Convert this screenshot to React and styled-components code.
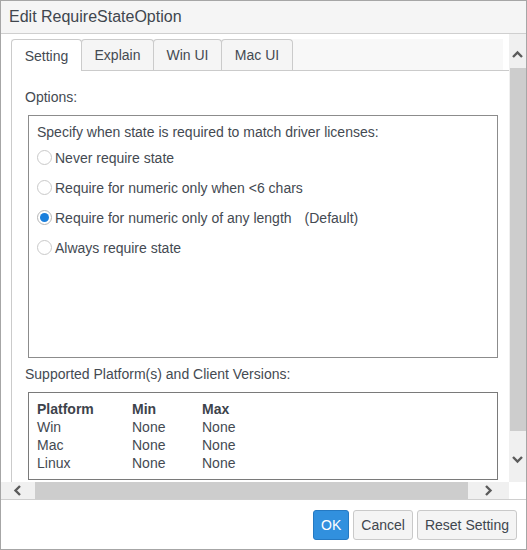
import React from 'react'
import styled, { createGlobalStyle } from 'styled-components';

const GlobalStyle = createGlobalStyle`
  html, body {
    margin: 0;
    padding: 0;
    background: #fff;
  }
  * {
    box-sizing: border-box;
  }
`;

const Dialog = styled.div`
  width: 527px;
  height: 550px;
  border: 1px solid #a6a6a6;
  display: flex;
  flex-direction: column;
  font-family: "Liberation Sans", Arial, sans-serif;
  font-size: 14px;
  color: #444a52;
  background: #fff;
`;

const TitleBar = styled.div`
  height: 33px;
  flex: none;
  display: flex;
  align-items: center;
  padding-left: 8px;
  background: #f5f5f5;
  border-bottom: 1px solid #cfcfcf;
  font-size: 16px;
  color: #40464e;
`;

const Main = styled.div`
  height: 465px;
  flex: none;
  display: grid;
  grid-template-columns: 1fr 17px;
  grid-template-rows: 1fr 17px;
`;

const Viewport = styled.div`
  overflow: hidden;
  padding: 5px 0 0 10px;
`;

const Tabs = styled.div`
  width: 540px;
`;

const TabList = styled.div`
  display: flex;
  width: 492px;
  height: 31px;
  background: #f8f8f8;
`;

const Tab = styled.div`
  position: relative;
  z-index: ${p => (p.active ? 1 : 0)};
  width: ${p => p.w};
  height: ${p => (p.active ? '32px' : '31px')};
  margin-right: -1px;
  display: flex;
  align-items: center;
  justify-content: center;
  border: 1px solid #cbcbcb;
  border-bottom: none;
  border-radius: 4px 4px 0 0;
  background: ${p => (p.active ? '#fff' : '#f5f5f5')};
  color: #444a52;
`;

const Panel = styled.div`
  border-top: 1px solid #cbcbcb;
  border-left: 1px solid #cbcbcb;
  padding: 17px 0 20px 13px;
  height: 420px;
`;

const Label = styled.div`
  line-height: 18px;
  margin-top: ${p => p.top || '0px'};
`;

const Box = styled.div`
  width: 470px;
  height: ${p => p.height};
  margin: 9px 0 0 3px;
  border: 1px solid ${p => p.border || '#8c8c8c'};
  padding: ${p => p.pad};
`;

const Prompt = styled.div`
  line-height: 18px;
  margin-bottom: 2px;
`;

const RadioRow = styled.label`
  height: 30px;
  display: flex;
  align-items: center;
`;

const Radio = styled.input.attrs({ type: 'radio' })`
  appearance: none;
  width: 15px;
  height: 15px;
  margin: -2px 3px 0 0;
  border-radius: 50%;
  border: 1px solid #c9c9c9;
  background: #fff;
  display: grid;
  place-items: center;

  &:checked::after {
    content: '';
    width: 9px;
    height: 9px;
    border-radius: 50%;
    background: #1a7fdc;
  }
  &:checked {
    border-color: #b5b5b5;
  }
`;

const Default = styled.span`
  margin-left: 13px;
`;

const Table = styled.div`
  display: grid;
  grid-template-columns: 95px 70px auto;
  line-height: 18px;
`;

const Cell = styled.div`
  font-weight: ${p => (p.head ? 700 : 400)};
  color: ${p => (p.head ? '#3d434b' : '#444a52')};
`;

const VScroll = styled.div`
  background: #f0f0f0;
  display: flex;
  flex-direction: column;
`;

const HScroll = styled.div`
  background: #f0f0f0;
  display: flex;
`;

const ScrollBtn = styled.div`
  flex: ${p => p.grow ? '1' : 'none'};
  width: ${p => p.w || 'auto'};
  height: ${p => p.h || 'auto'};
  display: flex;
  justify-content: ${p => p.justify || 'center'};
  align-items: ${p => p.align || 'center'};
  padding: ${p => p.pad || '0'};
`;

const Thumb = styled.div`
  background: #cdcdcd;
  flex: ${p => p.grow ? '1' : 'none'};
  width: ${p => p.w || 'auto'};
  height: ${p => p.h || 'auto'};
  margin: ${p => p.m || '0'};
`;

const Corner = styled.div`
  background: #fff;
`;

const Footer = styled.div`
  height: 50px;
  flex: none;
  border-top: 1px solid #cfcfcf;
  display: flex;
  justify-content: flex-end;
  align-items: flex-start;
  gap: 4px;
  padding: 10px 9px 0 0;
`;

const Button = styled.button`
  height: 30px;
  padding: 0 7px;
  font-family: inherit;
  font-size: 14px;
  border-radius: 3px;
  border: 1px solid ${p => (p.primary ? '#2579c2' : '#c9c9c9')};
  background: ${p => (p.primary ? '#3190de' : '#f4f4f4')};
  color: ${p => (p.primary ? '#fff' : '#40464e')};
`;

const Chevron = ({ dir }) => {
  const rot = { up: 0, right: 90, down: 180, left: 270 }[dir];
  return (
    <svg width="11" height="11" viewBox="0 0 11 11" style={{ transform: `rotate(${rot}deg)` }}>
      <polyline points="1,8 5.5,3.5 10,8" fill="none" stroke="#5b5b5b" strokeWidth="2.4" />
    </svg>
  );
};

const tabs = [
  ['Setting', '71px'],
  ['Explain', '73px'],
  ['Win UI', '69px'],
  ['Mac UI', '72px'],
];

const options = [
  'Never require state',
  'Require for numeric only when <6 chars',
  'Require for numeric only of any length',
  'Always require state',
];

const platforms = [
  ['Win', 'None', 'None'],
  ['Mac', 'None', 'None'],
  ['Linux', 'None', 'None'],
];

const App = () => {
  return (
    <>
      <GlobalStyle />
      <Dialog>
        <TitleBar>Edit RequireStateOption</TitleBar>
        <Main>
          <Viewport>
            <Tabs>
              <TabList>
                {tabs.map(([t, w], i) => (
                  <Tab key={t} w={w} active={i === 0}>{t}</Tab>
                ))}
              </TabList>
              <Panel>
                <Label>Options:</Label>
                <Box height="243px" pad="7px 8px">
                  <Prompt>Specify when state is required to match driver licenses:</Prompt>
                  {options.map((o, i) => (
                    <RadioRow key={o}>
                      <Radio name="state" defaultChecked={i === 2} />
                      {o}
                      {i === 2 && <Default>(Default)</Default>}
                    </RadioRow>
                  ))}
                </Box>
                <Label top="7px">Supported Platform(s) and Client Versions:</Label>
                <Box height="88px" pad="7px 8px" border="#7a7a7a">
                  <Table>
                    <Cell head>Platform</Cell>
                    <Cell head>Min</Cell>
                    <Cell head>Max</Cell>
                    {platforms.map(row => row.map((c, j) => <Cell key={row[0] + j}>{c}</Cell>))}
                  </Table>
                </Box>
              </Panel>
            </Tabs>
          </Viewport>
          <VScroll>
            <ScrollBtn h="34px" align="flex-start" pad="15px 0 0 0"><Chevron dir="up" /></ScrollBtn>
            <Thumb h="363px" m="0 0 0 1px" />
            <ScrollBtn grow align="flex-start" pad="23px 0 0 0"><Chevron dir="down" /></ScrollBtn>
          </VScroll>
          <HScroll>
            <ScrollBtn w="34px" pad="0 0 0 11px" justify="flex-start"><Chevron dir="left" /></ScrollBtn>
            <Thumb grow />
            <ScrollBtn w="41px"><Chevron dir="right" /></ScrollBtn>
          </HScroll>
          <Corner />
        </Main>
        <Footer>
          <Button primary>OK</Button>
          <Button>Cancel</Button>
          <Button>Reset Setting</Button>
        </Footer>
      </Dialog>
    </>
  )
}

export default App;
